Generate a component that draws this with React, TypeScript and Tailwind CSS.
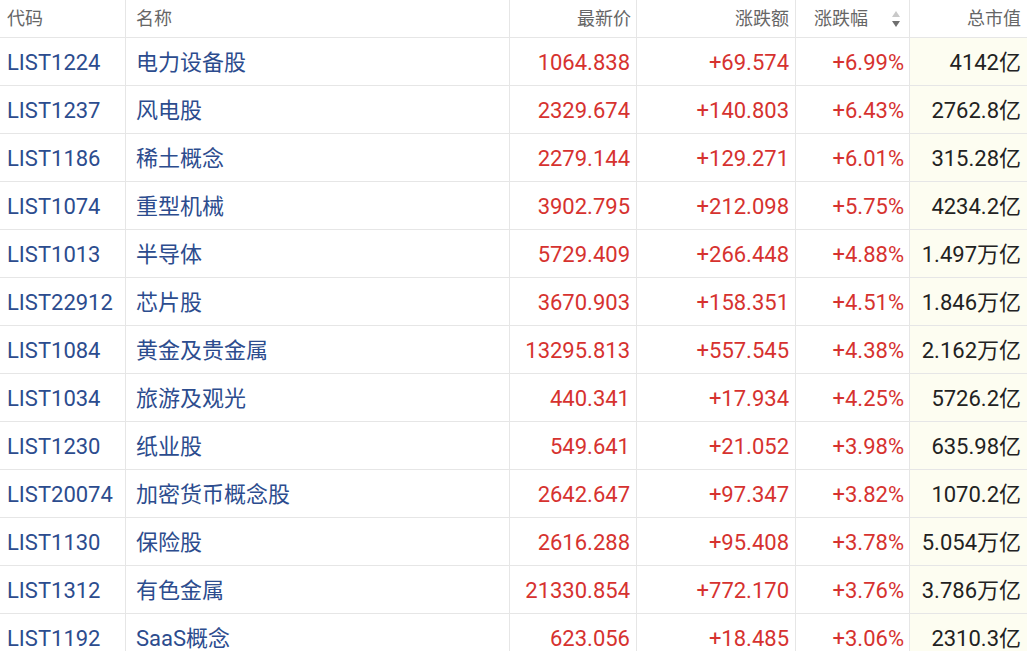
const rows = [
  ["LIST1224", "电力设备股", "1064.838", "+69.574", "+6.99%", "4142亿"],
  ["LIST1237", "风电股", "2329.674", "+140.803", "+6.43%", "2762.8亿"],
  ["LIST1186", "稀土概念", "2279.144", "+129.271", "+6.01%", "315.28亿"],
  ["LIST1074", "重型机械", "3902.795", "+212.098", "+5.75%", "4234.2亿"],
  ["LIST1013", "半导体", "5729.409", "+266.448", "+4.88%", "1.497万亿"],
  ["LIST22912", "芯片股", "3670.903", "+158.351", "+4.51%", "1.846万亿"],
  ["LIST1084", "黄金及贵金属", "13295.813", "+557.545", "+4.38%", "2.162万亿"],
  ["LIST1034", "旅游及观光", "440.341", "+17.934", "+4.25%", "5726.2亿"],
  ["LIST1230", "纸业股", "549.641", "+21.052", "+3.98%", "635.98亿"],
  ["LIST20074", "加密货币概念股", "2642.647", "+97.347", "+3.82%", "1070.2亿"],
  ["LIST1130", "保险股", "2616.288", "+95.408", "+3.78%", "5.054万亿"],
  ["LIST1312", "有色金属", "21330.854", "+772.170", "+3.76%", "3.786万亿"],
  ["LIST1192", "SaaS概念", "623.056", "+18.485", "+3.06%", "2310.3亿"],
];

const cols = "grid grid-cols-[126px_384px_127px_159px_114px_117px]";
const cell = "border-r border-b border-[#e6e6e6] flex items-center";

function SortIcon() {
  return (
    <svg width="10" height="22" viewBox="0 0 10 22" className="shrink-0">
      <path d="M5 3 L9 9 L1 9 Z" fill="#c9c9c9" />
      <path d="M1 13 L9 13 L5 19 Z" fill="#6f6f6f" />
    </svg>
  );
}

export default function App() {
  return (
    <div
      className="w-[1027px] h-[651px] overflow-hidden bg-white"
      style={{ fontFamily: 'Roboto, "Noto Sans CJK SC", sans-serif' }}
    >
      <div className={`${cols} h-[38px] text-[18px] text-[#666]`}>
        <div className={`${cell} pl-[7px]`}>代码</div>
        <div className={`${cell} pl-[10px]`}>名称</div>
        <div className={`${cell} justify-end pr-[5px]`}>最新价</div>
        <div className={`${cell} justify-end pr-[6px]`}>涨跌额</div>
        <div className={`${cell} justify-between pl-[18px] pr-[8px]`}>
          <span>涨跌幅</span>
          <SortIcon />
        </div>
        <div className={`${cell} border-r-0 justify-end pr-[6px]`}>总市值</div>
      </div>
      {rows.map(r => (
        <div key={r[0]} className={`${cols} h-[48px] text-[22px]`}>
          <div className={`${cell} pt-[2px] pl-[7px] text-[#2c4c8e]`}>{r[0]}</div>
          <div className={`${cell} pt-[2px] pl-[10px] text-[#2c4c8e]`}>{r[1]}</div>
          <div className={`${cell} pt-[2px] justify-end pr-[6px] text-[#d6322f]`}>{r[2]}</div>
          <div className={`${cell} pt-[2px] justify-end pr-[6px] text-[#d6322f]`}>{r[3]}</div>
          <div className={`${cell} pt-[2px] justify-end pr-[5px] text-[#d6322f]`}>{r[4]}</div>
          <div className={`${cell} pt-[2px] border-r-0 justify-end pr-[6px] text-[#222] bg-[#fdfdf1]`}>{r[5]}</div>
        </div>
      ))}
    </div>
  );
}
